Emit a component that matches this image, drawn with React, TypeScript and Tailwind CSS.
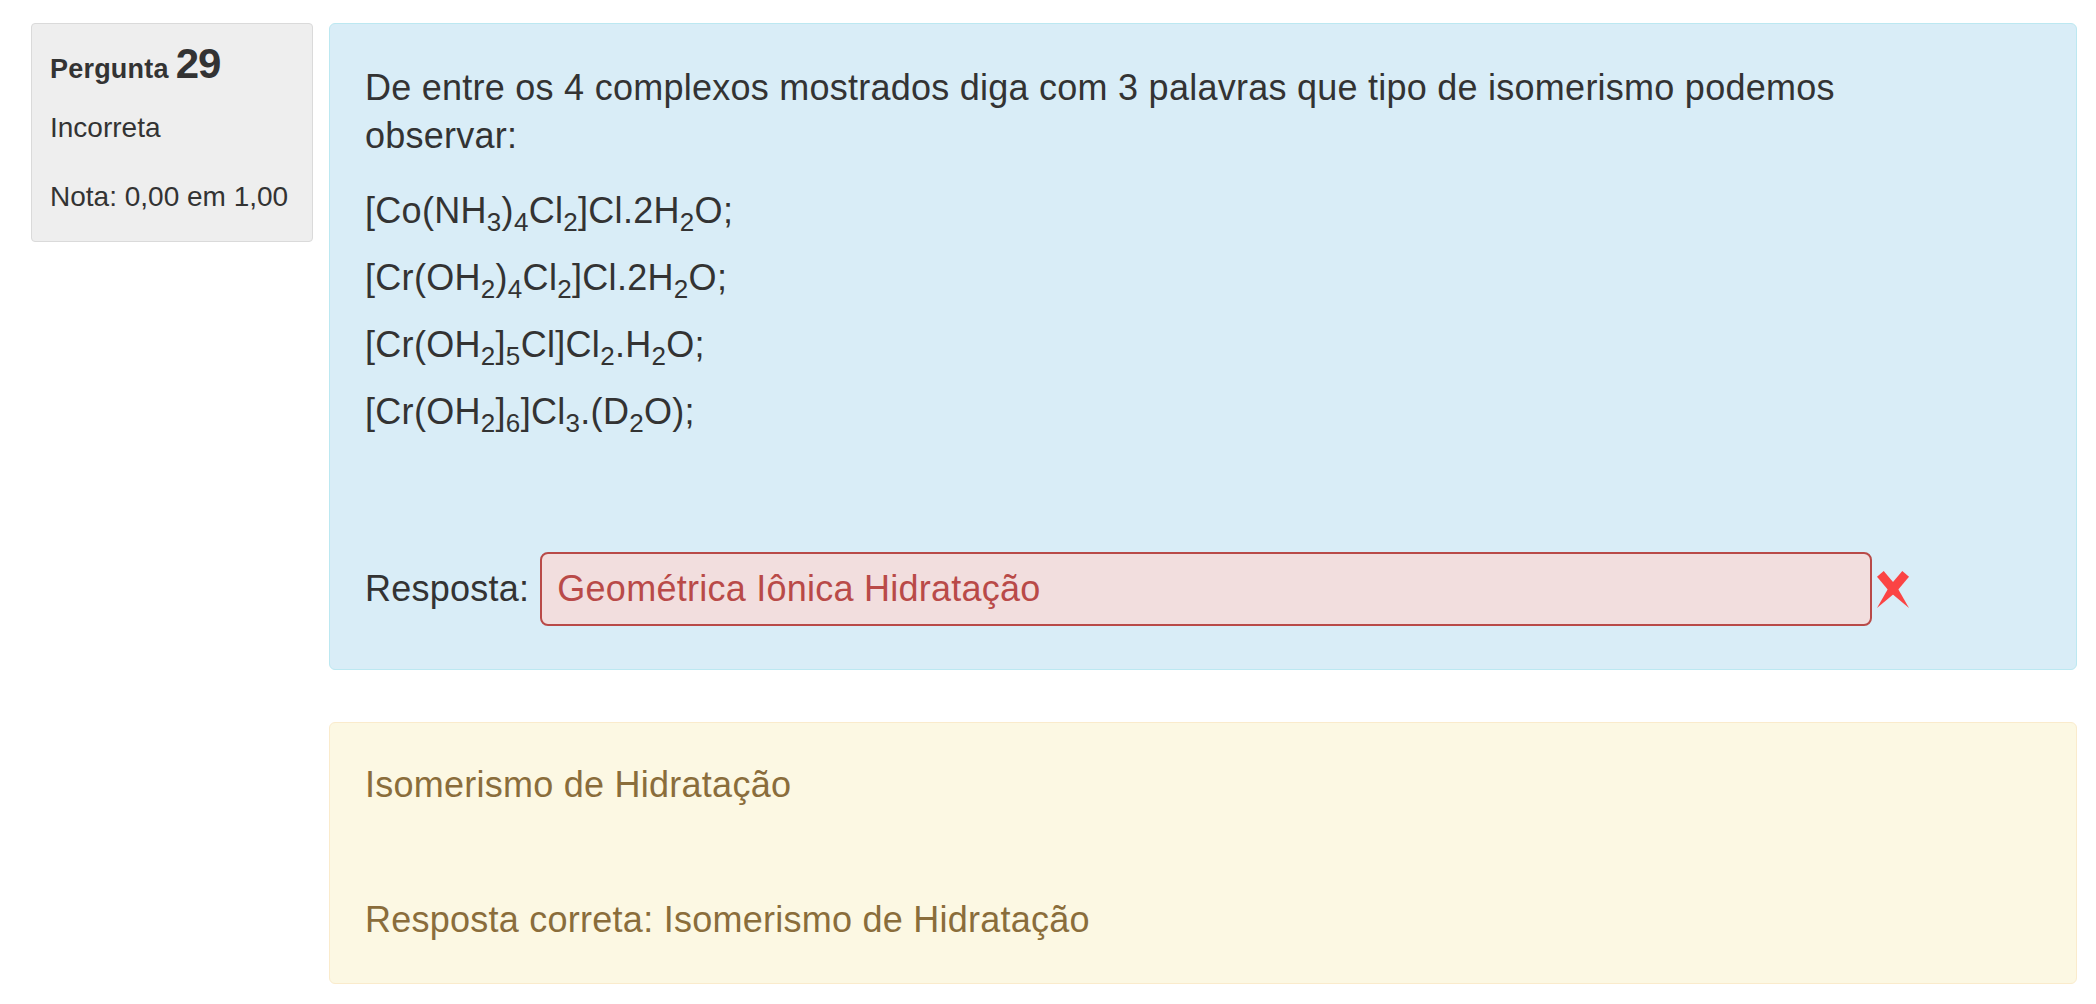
type Seg = [string, boolean]

const formulas: Seg[][] = [
  [['[Co(NH', false], ['3', true], [')', false], ['4', true], ['Cl', false], ['2', true], [']Cl.2H', false], ['2', true], ['O;', false]],
  [['[Cr(OH', false], ['2', true], [')', false], ['4', true], ['Cl', false], ['2', true], [']Cl.2H', false], ['2', true], ['O;', false]],
  [['[Cr(OH', false], ['2', true], [']', false], ['5', true], ['Cl]Cl', false], ['2', true], ['.H', false], ['2', true], ['O;', false]],
  [['[Cr(OH', false], ['2', true], [']', false], ['6', true], [']Cl', false], ['3', true], ['.(D', false], ['2', true], ['O);', false]],
]

function Formula({ segs, last }: { segs: Seg[]; last: boolean }) {
  return (
    <p className={`leading-[48px] tracking-[0.3px] ${last ? '' : 'mb-[19px]'}`}>
      {segs.map(([t, sub], i) =>
        sub ? (
          <sub key={i} className="text-[26px] bottom-[-8px]">
            {t}
          </sub>
        ) : (
          <span key={i}>{t}</span>
        )
      )}
    </p>
  )
}

// red cross shown next to a wrong answer
function WrongIcon() {
  return (
    <svg width="32" height="37" viewBox="0 0 32 37" className="ml-[5px] shrink-0">
      <polygon points="0,5.7 6.7,0 19.4,15.1 32,37 12.6,20.8" fill="#fb4444" />
      <polygon points="32,5.7 25.3,0 12.6,15.1 0,37 19.4,20.8" fill="#fb4444" />
    </svg>
  )
}

function InfoBox() {
  return (
    <div className="w-[282px] shrink-0 self-start rounded-[4px] border border-[#dadada] bg-[#eeeeee] px-[18px] pt-[18px] pb-[24px] text-[#333333]">
      <h3 className="flex h-[48px] items-baseline gap-[7px] font-bold">
        <span className="text-[27px] leading-[44px] tracking-[0.2px]">Pergunta</span>
        <span className="text-[42px] leading-[44px] tracking-[-1px]">29</span>
      </h3>
      <div className="mt-[18px] text-[28px] leading-[40px]">Incorreta</div>
      <div className="mt-[29px] text-[28px] leading-[40px]">Nota: 0,00 em 1,00</div>
    </div>
  )
}

export default function App() {
  return (
    <div
      className="min-h-screen bg-white pt-[23px] pl-[31px] pr-[19px]"
      style={{ fontFamily: '"Liberation Sans", Arial, sans-serif' }}
    >
      <div className="flex gap-[16px]">
        <InfoBox />

        <div className="flex flex-1 flex-col">
          {/* question */}
          <div className="rounded-[6px] border border-[#bce8f1] bg-[#d9edf7] pt-[40px] pr-[35px] pb-[43px] pl-[35px] text-[36px] text-[#333333]">
            <p className="mb-[27px] max-w-[1540px] leading-[48px] tracking-[0.25px]">
              De entre os 4 complexos mostrados diga com 3 palavras que tipo de isomerismo podemos observar:
            </p>
            {formulas.map((f, i) => (
              <Formula key={i} segs={f} last={i === formulas.length - 1} />
            ))}

            <div className="mt-[116px] flex items-center">
              <label className="leading-[48px] tracking-[0.25px]">Resposta:</label>
              <input
                readOnly
                value="Geométrica Iônica Hidratação"
                className="ml-[11px] h-[74px] w-[1332px] rounded-[8px] border-2 border-[#b94a48] bg-[#f2dede] pl-[15px] text-[36px] tracking-[0.25px] text-[#b94a48] outline-none"
                style={{ fontFamily: '"Liberation Sans", Arial, sans-serif' }}
              />
              <WrongIcon />
            </div>
          </div>

          {/* feedback */}
          <div className="mt-[52px] rounded-[6px] border border-[#faebcc] bg-[#fcf8e3] pt-[38px] pb-[39px] pl-[35px] text-[36px] leading-[48px] tracking-[0.25px] text-[#8a6d3b]">
            <p className="mb-[87px]">Isomerismo de Hidratação</p>
            <p>Resposta correta: Isomerismo de Hidratação</p>
          </div>
        </div>
      </div>
    </div>
  )
}
